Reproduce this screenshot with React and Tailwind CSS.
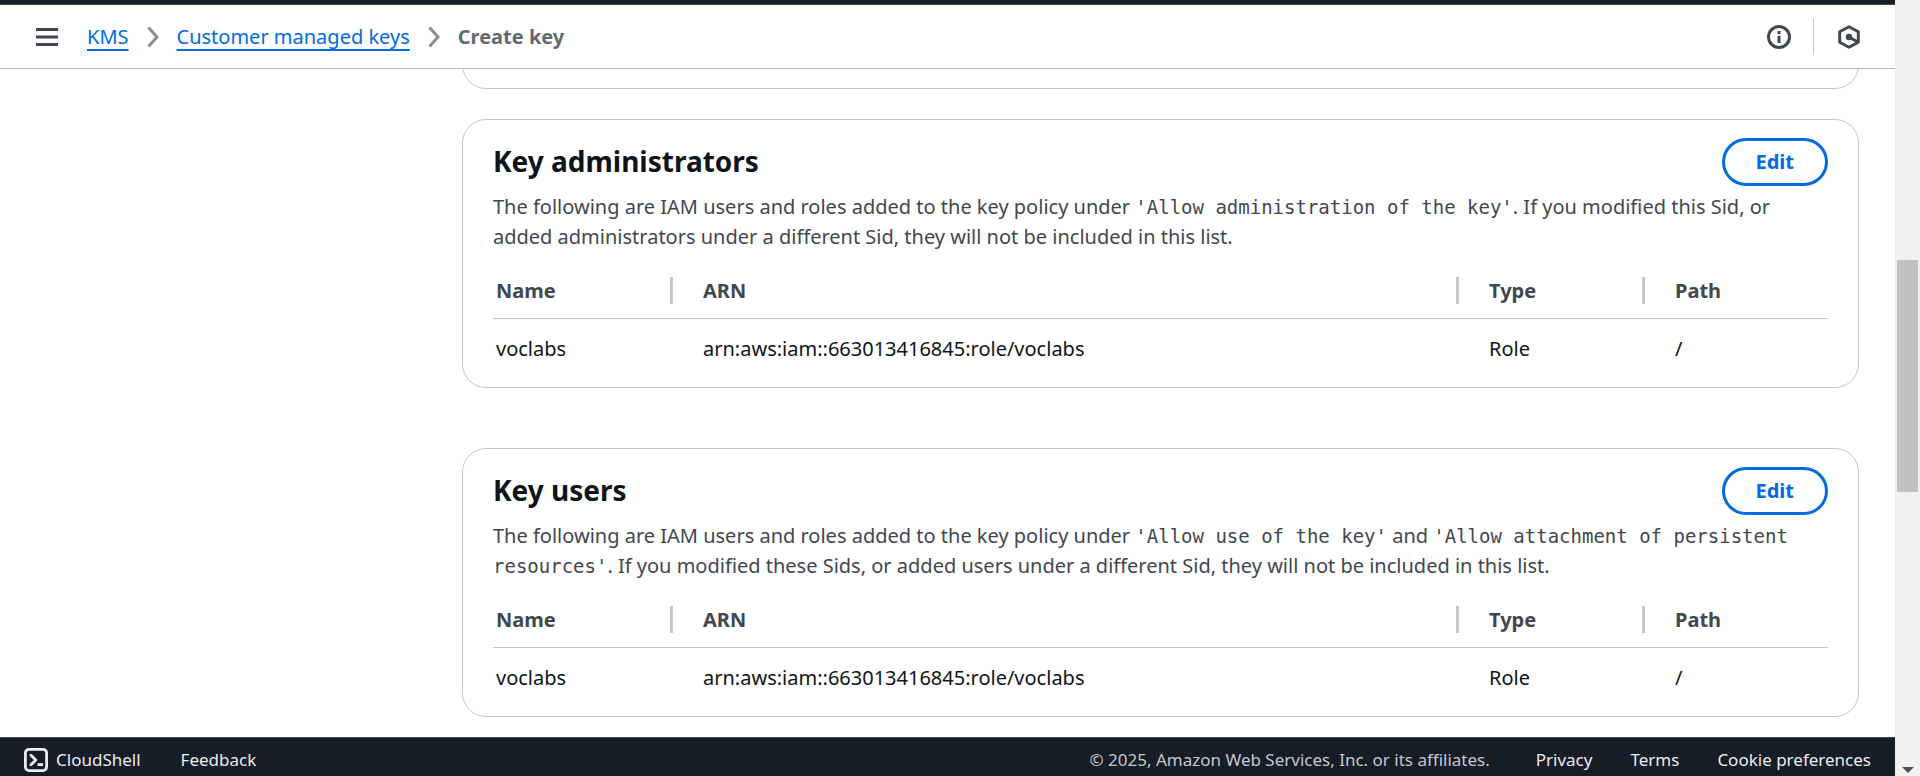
function MenuIcon() {
  return (
    <svg viewBox="0 0 24 24" className="size-6" fill="none" stroke="currentColor" strokeWidth="3" aria-hidden="true">
      <path d="M1 4.5h22M1 12h22M1 19.5h22" />
    </svg>
  );
}

function Chevron() {
  return (
    <svg viewBox="0 0 12 22" className="h-[22px] w-3 text-[#8c8c94]" fill="none" stroke="currentColor" strokeWidth="3" aria-hidden="true">
      <path d="M1.5 1.5 L10 11 L1.5 20.5" />
    </svg>
  );
}

function InfoIcon() {
  return (
    <svg viewBox="0 0 24 24" className="size-6" fill="none" stroke="currentColor" strokeWidth="3" aria-hidden="true">
      <circle cx="12" cy="12" r="10.5" />
      <path d="M12 10.8v7.2M12 6v3" />
    </svg>
  );
}

function HexIcon() {
  return (
    <svg viewBox="0 0 24 24" className="size-6" fill="none" stroke="currentColor" strokeWidth="3" strokeLinejoin="round" aria-hidden="true">
      <path d="M21.3 17.2 V6.8 L12 1.7 L2.7 6.8 V17.2 L12 22.3 Z" />
      <circle cx="12" cy="12" r="3.2" fill="currentColor" stroke="none" />
      <path d="M12 12 L20.5 17" />
    </svg>
  );
}

function TerminalIcon() {
  return (
    <svg viewBox="0 0 24 24" className="size-6" fill="none" stroke="currentColor" strokeWidth="2.8" strokeLinejoin="round" aria-hidden="true">
      <rect x="1.4" y="1.4" width="21.2" height="21.2" rx="3.5" />
      <path d="M7 7.2 L11.8 12 L7 16.8" strokeLinecap="round" />
      <path d="M13.5 16.6h5.5" />
    </svg>
  );
}

function Code({ children }) {
  return <code className="font-['DejaVu_Sans_Mono',monospace] text-[19px]">{children}</code>;
}

const columns = [
  { label: 'Name', width: 'w-[180px]', pad: 'pl-[3px]' },
  { label: 'ARN', width: '', pad: 'pl-[30px]' },
  { label: 'Type', width: 'w-[186px]', pad: 'pl-[30px]' },
  { label: 'Path', width: 'w-[183px]', pad: 'pl-[30px]' },
];

const row = ['voclabs', 'arn:aws:iam::663013416845:role/voclabs', 'Role', '/'];

function KeyPanel({ title, children }) {
  return (
    <section className="rounded-3xl border border-[#c6c6cd] px-[30px] pt-[18px] pb-2">
      <div className="flex items-start justify-between">
        <h2 className="text-[28px] leading-[46px] font-bold text-[#0f141a]">{title}</h2>
        <button type="button" aria-label={`Edit ${title}`} className="h-12 rounded-full border-[3px] border-[#006ce0] px-[31px] font-bold text-[#006ce0]">
          Edit
        </button>
      </div>
      <p className="mt-1.5 leading-[30px] text-[#424650]">{children}</p>
      <table className="mt-3 w-full table-fixed text-left">
        <thead>
          <tr className="h-[54px] border-b border-[#c6c6cd] text-[#424650]">
            {columns.map((c, i) => (
              <th key={c.label} scope="col" className={`${c.width} p-0 font-bold`}>
                <div className={`${c.pad} flex h-[27px] items-center ${i < 3 ? 'border-r-[3px] border-[#c6c6cd]' : ''}`}>{c.label}</div>
              </th>
            ))}
          </tr>
        </thead>
        <tbody>
          <tr className="h-[61px] text-[#0f141a]">
            {row.map((v, i) => (
              <td key={v} className={`${columns[i].pad} py-0 pr-0`}>{v}</td>
            ))}
          </tr>
        </tbody>
      </table>
    </section>
  );
}

export default function App() {
  return (
    <div className="flex h-screen overflow-hidden bg-white font-['Noto_Sans',sans-serif] text-xl text-[#0f141a]">
      <div className="flex min-w-0 flex-1 flex-col">
        <div className="h-[5px] shrink-0 border-b border-[#424650] bg-[#161d26]" />
        <header className="flex h-16 shrink-0 items-center border-b border-[#b4b4bb] pr-[34px] pl-[35px] text-[#424650]">
          <button type="button" aria-label="Open navigation"><MenuIcon /></button>
          <nav aria-label="Breadcrumb" className="ml-7 flex items-center gap-[18px]">
            <a href="#kms" className="text-[#006ce0] underline decoration-2 underline-offset-[5px]">KMS</a>
            <Chevron />
            <a href="#keys" className="text-[#006ce0] underline decoration-2 underline-offset-[5px]">Customer managed keys</a>
            <Chevron />
            <span className="font-bold text-[#656871]">Create key</span>
          </nav>
          <div className="ml-auto flex items-center">
            <button type="button" aria-label="Info"><InfoIcon /></button>
            <div className="mr-[23px] ml-[22px] h-[37px] w-px bg-[#c6c6cd]" />
            <button type="button" aria-label="Amazon Q"><HexIcon /></button>
          </div>
        </header>

        <main className="min-h-0 flex-1 overflow-hidden pr-9 pl-[462px]">
          <div className="-mt-7 mb-[30px] h-12 rounded-3xl border border-[#c6c6cd]" />
          <div className="flex flex-col gap-[60px]">
            <KeyPanel title="Key administrators">
              The following are IAM users and roles added to the key policy under <Code>'Allow administration of the key'</Code>. If you modified this Sid, or added administrators under a different Sid, they will not be included in this list.
            </KeyPanel>
            <KeyPanel title="Key users">
              The following are IAM users and roles added to the key policy under <Code>'Allow use of the key'</Code> and <Code>'Allow attachment of persistent resources'</Code>. If you modified these Sids, or added users under a different Sid, they will not be included in this list.
            </KeyPanel>
          </div>
        </main>

        <footer className="flex h-[39px] shrink-0 items-center border-t border-[#424650] bg-[#161d26] px-6 pt-1.5 text-[17px] text-[#ebebf0]">
          <button type="button" className="flex items-center gap-2"><TerminalIcon />CloudShell</button>
          <a href="#feedback" className="ml-10">Feedback</a>
          <div className="ml-auto flex gap-[38px]">
            <span className="mr-2 text-[#c6c6cd]">© 2025, Amazon Web Services, Inc. or its affiliates.</span>
            <a href="#privacy">Privacy</a>
            <a href="#terms">Terms</a>
            <a href="#cookies">Cookie preferences</a>
          </div>
        </footer>
      </div>

      <div aria-hidden="true" className="flex w-[25px] shrink-0 flex-col items-center bg-[#f0f0f0] pb-[3px]">
        <div className="h-[260px] shrink-0" />
        <div className="h-[30%] w-[21px] bg-[#c1c1c1]" />
        <svg viewBox="0 0 12 6" className="mt-auto h-1.5 w-3 fill-[#505050]"><path d="M0 0h12L6 6z" /></svg>
      </div>
    </div>
  );
}
